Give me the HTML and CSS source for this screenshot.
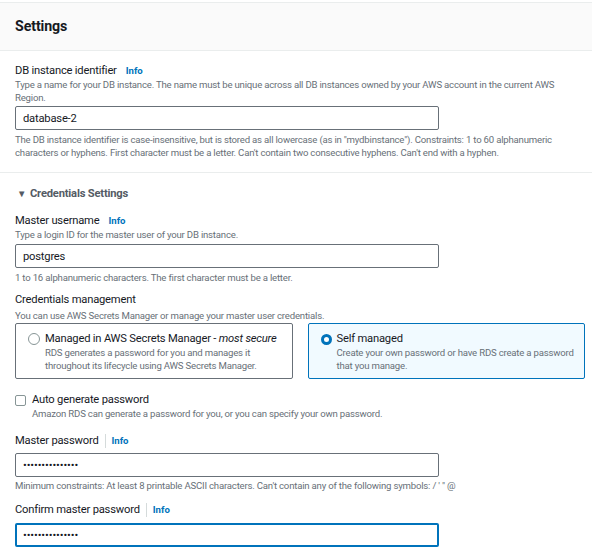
FILE: index.html
```html
<!DOCTYPE html>
<html lang="en">
<head>
<meta charset="utf-8">
<title>Settings</title>
<link rel="stylesheet" href="styles.css">
</head>
<body>
<div class="page">
  <div class="container">
    <div class="header"><h2 class="title">Settings</h2></div>

    <div class="section first">
      <div class="field">
        <div class="label-row"><span class="label">DB instance identifier</span><a class="info">Info</a></div>
        <div class="desc">Type a name for your DB instance. The name must be unique across all DB instances owned by your AWS account in the current AWS Region.</div>
        <div class="input-wrap"><input class="input" type="text" value="database-2"></div>
        <div class="hint">The DB instance identifier is case-insensitive, but is stored as all lowercase (as in "mydbinstance"). Constraints: 1 to 60 alphanumeric characters or hyphens. First character must be a letter. Can't contain two consecutive hyphens. Can't end with a hyphen.</div>
      </div>
    </div>

    <div class="section second">
      <div class="expander"><span class="caret">&#9660;</span><span class="exp-title">Credentials Settings</span></div>

      <div class="field user">
        <div class="label-row"><span class="label">Master username</span><a class="info">Info</a></div>
        <div class="desc">Type a login ID for the master user of your DB instance.</div>
        <div class="input-wrap tight"><input class="input" type="text" value="postgres"></div>
        <div class="hint">1 to 16 alphanumeric characters. The first character must be a letter.</div>
      </div>

      <div class="field cred">
        <div class="label-row"><span class="label">Credentials management</span></div>
        <div class="desc">You can use AWS Secrets Manager or manage your master user credentials.</div>
        <div class="tiles">
          <div class="tile">
            <span class="radio"></span>
            <div class="tile-body">
              <div class="tile-title">Managed in AWS Secrets Manager - <em>most secure</em></div>
              <div class="tile-desc">RDS generates a password for you and manages it throughout its lifecycle using AWS Secrets Manager.</div>
            </div>
          </div>
          <div class="tile selected">
            <span class="radio checked"></span>
            <div class="tile-body">
              <div class="tile-title">Self managed</div>
              <div class="tile-desc">Create your own password or have RDS create a password that you manage.</div>
            </div>
          </div>
        </div>
      </div>

      <div class="check-row">
        <span class="checkbox"></span>
        <div>
          <div class="label">Auto generate password</div>
          <div class="desc">Amazon RDS can generate a password for you, or you can specify your own password.</div>
        </div>
      </div>

      <div class="field pw">
        <div class="label-row"><span class="label">Master password</span><span class="divider"></span><a class="info">Info</a></div>
        <div class="input-wrap pw-input"><input class="input dots" type="password" value="aaaaaaaaaaaaaaa"></div>
        <div class="hint">Minimum constraints: At least 8 printable ASCII characters. Can't contain any of the following symbols: / ' " @</div>
      </div>

      <div class="field pw2">
        <div class="label-row"><span class="label">Confirm master password</span><span class="divider"></span><a class="info">Info</a></div>
        <div class="input-wrap pw-input2"><input class="input dots focused" type="password" value="aaaaaaaaaaaaaaa"></div>
      </div>
    </div>
  </div>
</div>
</body>
</html>
```
FILE: styles.css
```css
html, body {
  margin: 0;
  padding: 0;
  background: #ffffff;
}
body {
  font-family: Roboto, "Liberation Sans", sans-serif;
  color: #16191f;
  letter-spacing: -0.2px;
}
.page {
  padding-top: 2px;
}
.container {
  border-top: 1px solid #eaeded;
}
.header {
  height: 47px;
  background: #fafafa;
  border-bottom: 1px solid #eaeded;
  padding: 0 15px;
  display: flex;
  align-items: center;
}
.title {
  margin: 0 0 1px;
  font-size: 14.2px;
  font-weight: 700;
  line-height: 18px;
  color: #16191f;
  letter-spacing: -0.1px;
}
.section {
  padding: 0 7px 0 15px;
}
.section.first {
  padding-top: 13px;
  padding-bottom: 13px;
  border-bottom: 1px solid #eaeded;
}
.section.second {
  padding-top: 14px;
}
.label-row {
  display: flex;
  align-items: center;
  height: 14px;
}
.label {
  font-size: 11.2px;
  line-height: 14px;
  color: #16191f;
}
.info {
  margin-left: 9px;
  font-size: 9.6px;
  font-weight: 700;
  color: #0073bb;
  line-height: 14px;
  letter-spacing: 0;
}
.divider {
  width: 1px;
  height: 14px;
  background: #d5dbdb;
  margin-left: 6px;
}
.divider + .info {
  margin-left: 6px;
}
.desc, .hint, .tile-desc {
  font-size: 9.6px;
  line-height: 13px;
  color: #687078;
}
.input-wrap {
  width: 424px;
  margin-top: 2px;
}
.input-wrap.tight {
  margin-top: 3px;
}
.input {
  box-sizing: border-box;
  display: block;
  width: 100%;
  height: 24px;
  margin: 0;
  padding: 0 7px;
  border: 1px solid #687078;
  border-radius: 2px;
  background: #ffffff;
  font-family: Roboto, "Liberation Sans", sans-serif;
  font-size: 11.2px;
  color: #16191f;
  letter-spacing: -0.2px;
  outline: none;
}
.input.dots {
  font-size: 11.2px;
  letter-spacing: -0.1px;
}
.input.focused {
  border: 2px solid #0073bb;
  padding: 0 6px;
}
.hint {
  margin-top: 3px;
}
.expander {
  display: flex;
  align-items: center;
  height: 14px;
  color: #545b64;
  padding-left: 2px;
}
.caret {
  font-size: 9.5px;
  line-height: 14px;
  width: 13px;
}
.exp-title {
  font-size: 11.2px;
  font-weight: 700;
  line-height: 14px;
}
.field.user {
  margin-top: 13px;
}
.field.cred {
  margin-top: 9px;
}
.field.cred .desc {
  margin-top: 2px;
}
.tiles {
  display: grid;
  grid-template-columns: 1fr 1fr;
  column-gap: 15px;
  margin-top: 1px;
}
.tile {
  box-sizing: border-box;
  height: 56px;
  border: 1px solid #687078;
  border-radius: 2px;
  padding: 8px 8px 6px 12px;
  display: flex;
  align-items: flex-start;
  gap: 5px;
}
.tile.selected {
  border-color: #0073bb;
  background: #f1faff;
}
.radio {
  box-sizing: border-box;
  flex: none;
  width: 12px;
  height: 12px;
  margin-top: 1px;
  border: 1px solid #879596;
  border-radius: 50%;
  background: #ffffff;
}
.radio.checked {
  width: 11px;
  height: 11px;
  margin-top: 2px;
  border: 3.5px solid #0073bb;
}
.tile-title {
  font-size: 11.2px;
  line-height: 14px;
  color: #16191f;
}
.tile-title em {
  font-style: italic;
}
.check-row {
  display: flex;
  align-items: flex-start;
  gap: 6px;
  margin-top: 14px;
}
.checkbox {
  box-sizing: border-box;
  flex: none;
  width: 11px;
  height: 11px;
  margin-top: 2px;
  border: 1px solid #879596;
  border-radius: 2px;
  background: #ffffff;
}
.field.pw {
  margin-top: 14px;
}
.pw-input {
  margin-top: 5px;
}
.field.pw .hint {
  margin-top: 2px;
}
.field.pw2 {
  margin-top: 11px;
}
.pw-input2 {
  margin-top: 6px;
}
```
